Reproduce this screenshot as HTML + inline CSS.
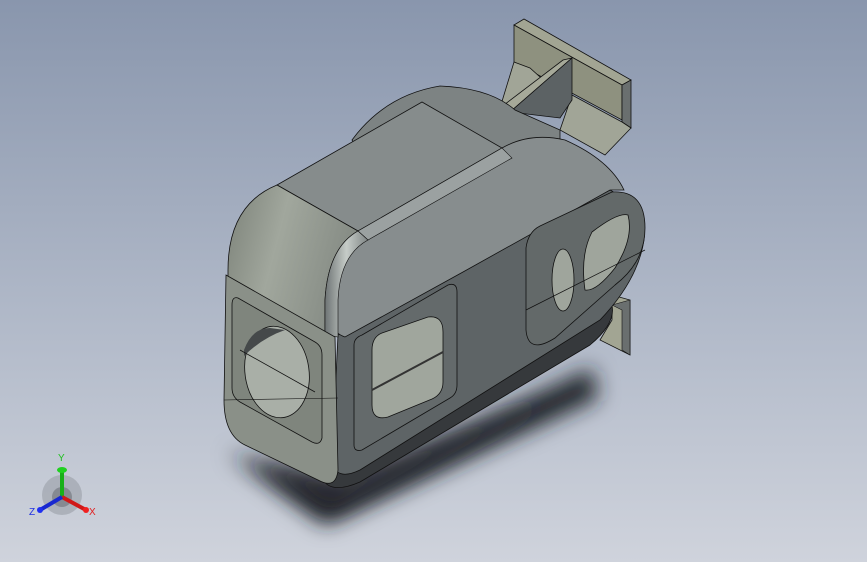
<!DOCTYPE html>
<html><head><meta charset="utf-8"><style>
html,body{margin:0;padding:0;width:867px;height:562px;overflow:hidden}
body{background:linear-gradient(#8996ad,#b3bbca 60%,#cfd3dc)}
svg{position:absolute;left:0;top:0}
</style></head><body>
<svg width="867" height="562" viewBox="0 0 867 562">
<defs>
<filter id="b" x="-50%" y="-50%" width="200%" height="200%"><feGaussianBlur stdDeviation="11"/></filter>
<linearGradient id="cap" x1="0" y1="0" x2="1" y2="0.3"><stop offset="0" stop-color="#7c8279"/><stop offset="0.45" stop-color="#a1a79d"/><stop offset="1" stop-color="#858b84"/></linearGradient>
<linearGradient id="fil" x1="0" y1="0" x2="1" y2="0"><stop offset="0" stop-color="#6e7474"/><stop offset="0.5" stop-color="#c6ccc8"/><stop offset="1" stop-color="#808686"/></linearGradient>
</defs>
<!-- shadow -->
<polygon points="228,452 325,525 598,398 592,368 340,488" fill="#1e2127" filter="url(#b)"/>
<polygon points="250,460 330,512 560,395 340,480" fill="#25282d" filter="url(#b)"/>
<!-- bracket -->
<polygon points="514,25 524,19 631,80 622,85" fill="#a2a593" stroke="#111" stroke-width="0.8"/>
<polygon points="514,25 622,85 622,120 514,62" fill="#8e917f" stroke="#111" stroke-width="0.8"/>
<polygon points="622,85 631,80 631,128 622,122" fill="#6a6f6f" stroke="#111" stroke-width="0.8"/>
<polygon points="514,62 530,68 560,95 500,108" fill="#a1a597" stroke="#111" stroke-width="0.8"/>
<polygon points="572,95 622,122 631,128 605,155 560,130" fill="#a1a597" stroke="#111" stroke-width="0.8"/>
<polygon points="500,108 563,60 572,58 510,112" fill="#a6a999" stroke="#111" stroke-width="0.8"/>
<polygon points="572,58 572,100 560,118 510,112" fill="#5c6264" stroke="#111" stroke-width="0.8"/>
<polygon points="612,295 630,300 630,355 600,340 612,320" fill="#a2a593" stroke="#111" stroke-width="0.8"/>
<polygon points="612,305 630,300 630,355 622,350 622,310" fill="#6a6f6f" stroke="#111" stroke-width="0.6"/>
<!-- back dome -->
<path d="M352,140 Q385,95 440,86 Q490,88 515,110 L560,130 L560,150 L370,170Z" fill="#7d8383" stroke="#111" stroke-width="0.8"/>
<!-- bottom dark -->
<path d="M330,465 L610,300 Q620,320 590,345 L360,482 Q330,495 322,478Z" fill="#36393c" stroke="#111" stroke-width="0.8"/>
<!-- side lower -->
<path d="M338,335 L610,190 Q648,210 644,240 Q638,280 600,320 L360,470 Q335,482 332,460Z" fill="#5e6466" stroke="#111" stroke-width="0.8"/>
<!-- side upper (light) -->
<path d="M362,232 L502,148 Q530,132 565,140 Q610,160 624,190 L610,190 L463,272 L345,337 Q325,330 325,300 Q330,250 362,232Z" fill="#878d8e" stroke="#111" stroke-width="0.8"/>
<!-- top face -->
<polygon points="277,185 422,102 502,148 358,231" fill="#868c8c" stroke="#111" stroke-width="0.8"/>
<path d="M358,231 L502,148 L512,158 L368,240Z" fill="#9ba1a1" stroke="#111" stroke-width="0.6"/>
<!-- end cap upper -->
<path d="M228,270 Q228,205 277,185 L358,231 Q328,248 325,300 L325,335 L228,277Z" fill="url(#cap)" stroke="#111" stroke-width="0.8"/>
<path d="M358,231 Q328,248 325,300 L325,335 L338,337 L338,300 Q340,255 368,240Z" fill="url(#fil)" stroke="#111" stroke-width="0.6"/>
<!-- end front face -->
<path d="M226,275 L335,337 L338,470 Q336,490 318,480 L245,445 Q224,435 224,400Z" fill="#8a9088" stroke="#111" stroke-width="0.8"/>
<path d="M238,298 L315,342 Q322,346 322,355 L322,438 Q320,446 312,442 L240,402 Q232,397 232,388 L232,305 Q232,296 238,298Z" fill="#7f857d" stroke="#111" stroke-width="0.8"/>
<ellipse cx="277" cy="372" rx="32" ry="46" fill="#a9afa7" stroke="#111" stroke-width="0.8" transform="rotate(-8 277 372)"/>
<path d="M244,350 Q252,328 270,328 L285,330 Q262,338 244,356Z" fill="#45494a"/>
<line x1="240" y1="350" x2="315" y2="392" stroke="#111" stroke-width="0.8"/>
<line x1="224" y1="400" x2="338" y2="398" stroke="#111" stroke-width="0.6"/>
<!-- middle panel -->
<path d="M362,335 L448,285 Q457,282 457,292 L457,385 Q457,394 450,398 L362,450 Q354,452 354,445 L354,345 Q354,338 362,335Z" fill="#646a6b" stroke="#111" stroke-width="0.8"/>
<path d="M382,333 L428,317 Q443,315 443,332 L443,382 Q443,394 432,399 L388,417 Q372,421 372,405 L372,350 Q372,337 382,333Z" fill="#a0a69d" stroke="#111" stroke-width="0.8"/>
<line x1="372" y1="390" x2="443" y2="352" stroke="#333" stroke-width="2"/>
<!-- right panel -->
<path d="M540,226 L612,192 Q645,190 645,228 Q645,262 615,285 L555,338 Q528,355 526,330 L526,248 Q528,232 540,226Z" fill="#636969" stroke="#111" stroke-width="0.8"/>
<ellipse cx="563" cy="280" rx="11" ry="31" fill="#9fa59c" stroke="#111" stroke-width="0.8"/>
<path d="M592,232 Q618,212 628,215 Q634,238 615,268 Q596,292 585,290 Q580,255 592,232Z" fill="#9fa59c" stroke="#111" stroke-width="0.8"/>
<line x1="526" y1="310" x2="645" y2="250" stroke="#111" stroke-width="0.7"/>
<!-- triad -->
<circle cx="62" cy="495" r="20" fill="#9a9ea6" opacity="0.6"/>
<circle cx="62" cy="497" r="10" fill="#6d7078" opacity="0.6"/>
<line x1="62" y1="497" x2="62" y2="470" stroke="#18b018" stroke-width="4"/>
<ellipse cx="62" cy="470" rx="5" ry="3" fill="#20d020"/>
<line x1="62" y1="497" x2="86" y2="510" stroke="#d01818" stroke-width="4"/>
<circle cx="86" cy="510" r="3" fill="#f02020"/>
<line x1="62" y1="497" x2="40" y2="510" stroke="#1828d0" stroke-width="4"/>
<circle cx="40" cy="510" r="3" fill="#2030f0"/>
<text x="58" y="461" font-family="Liberation Sans,sans-serif" font-size="10" fill="#20c020">Y</text>
<text x="89" y="515" font-family="Liberation Sans,sans-serif" font-size="10" fill="#e02020">X</text>
<text x="29" y="515" font-family="Liberation Sans,sans-serif" font-size="10" fill="#2030e0">Z</text>
</svg>
</body></html>
